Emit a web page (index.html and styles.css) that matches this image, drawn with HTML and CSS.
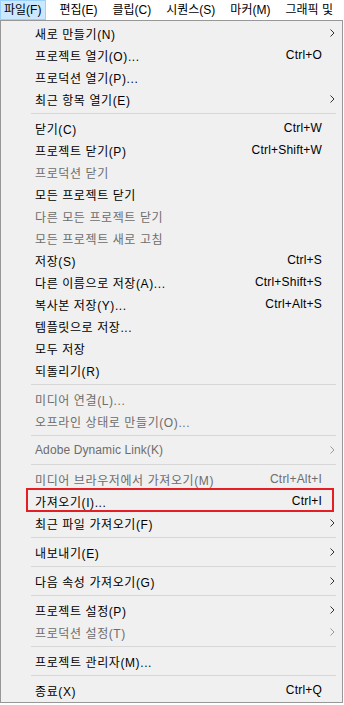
FILE: index.html
```html
<!DOCTYPE html>
<html lang="ko">
<head>
<meta charset="utf-8">
<title>파일 메뉴</title>
<link rel="stylesheet" href="styles.css">
</head>
<body>
<div class="menubar">
  <span class="top active">파일(F)</span>
  <span class="top">편집(E)</span>
  <span class="top">클립(C)</span>
  <span class="top">시퀀스(S)</span>
  <span class="top">마커(M)</span>
  <span class="top">그래픽 및</span>
</div>
<div class="menu">
  <div class="item"><span class="label">새로 만들기(N)</span><span class="key"></span><span class="arrow"><svg viewBox="0 0 5 8" width="5" height="8"><path d="M0.5 0.5 L4 4 L0.5 7.5" fill="none" stroke="currentColor" stroke-width="1"/></svg></span></div>
  <div class="item"><span class="label">프로젝트 열기(O)...</span><span class="key">Ctrl+O</span><span class="arrow"></span></div>
  <div class="item"><span class="label">프로덕션 열기(P)...</span><span class="key"></span><span class="arrow"></span></div>
  <div class="item"><span class="label">최근 항목 열기(E)</span><span class="key"></span><span class="arrow"><svg viewBox="0 0 5 8" width="5" height="8"><path d="M0.5 0.5 L4 4 L0.5 7.5" fill="none" stroke="currentColor" stroke-width="1"/></svg></span></div>
  <div class="sep"></div>
  <div class="item"><span class="label">닫기(C)</span><span class="key">Ctrl+W</span><span class="arrow"></span></div>
  <div class="item"><span class="label">프로젝트 닫기(P)</span><span class="key">Ctrl+Shift+W</span><span class="arrow"></span></div>
  <div class="item disabled"><span class="label">프로덕션 닫기</span><span class="key"></span><span class="arrow"></span></div>
  <div class="item"><span class="label">모든 프로젝트 닫기</span><span class="key"></span><span class="arrow"></span></div>
  <div class="item disabled"><span class="label">다른 모든 프로젝트 닫기</span><span class="key"></span><span class="arrow"></span></div>
  <div class="item disabled"><span class="label">모든 프로젝트 새로 고침</span><span class="key"></span><span class="arrow"></span></div>
  <div class="item"><span class="label">저장(S)</span><span class="key">Ctrl+S</span><span class="arrow"></span></div>
  <div class="item"><span class="label">다른 이름으로 저장(A)...</span><span class="key">Ctrl+Shift+S</span><span class="arrow"></span></div>
  <div class="item"><span class="label">복사본 저장(Y)...</span><span class="key">Ctrl+Alt+S</span><span class="arrow"></span></div>
  <div class="item"><span class="label">템플릿으로 저장...</span><span class="key"></span><span class="arrow"></span></div>
  <div class="item"><span class="label">모두 저장</span><span class="key"></span><span class="arrow"></span></div>
  <div class="item"><span class="label">되돌리기(R)</span><span class="key"></span><span class="arrow"></span></div>
  <div class="sep"></div>
  <div class="item disabled"><span class="label">미디어 연결(L)...</span><span class="key"></span><span class="arrow"></span></div>
  <div class="item disabled"><span class="label">오프라인 상태로 만들기(O)...</span><span class="key"></span><span class="arrow"></span></div>
  <div class="sep"></div>
  <div class="item disabled latin"><span class="label">Adobe Dynamic Link(K)</span><span class="key"></span><span class="arrow"><svg viewBox="0 0 5 8" width="5" height="8"><path d="M0.5 0.5 L4 4 L0.5 7.5" fill="none" stroke="currentColor" stroke-width="1"/></svg></span></div>
  <div class="sep"></div>
  <div class="item disabled"><span class="label">미디어 브라우저에서 가져오기(M)</span><span class="key">Ctrl+Alt+I</span><span class="arrow"></span></div>
  <div class="item marked"><span class="label">가져오기(I)...</span><span class="key">Ctrl+I</span><span class="arrow"></span></div>
  <div class="item"><span class="label">최근 파일 가져오기(F)</span><span class="key"></span><span class="arrow"><svg viewBox="0 0 5 8" width="5" height="8"><path d="M0.5 0.5 L4 4 L0.5 7.5" fill="none" stroke="currentColor" stroke-width="1"/></svg></span></div>
  <div class="sep"></div>
  <div class="item"><span class="label">내보내기(E)</span><span class="key"></span><span class="arrow"><svg viewBox="0 0 5 8" width="5" height="8"><path d="M0.5 0.5 L4 4 L0.5 7.5" fill="none" stroke="currentColor" stroke-width="1"/></svg></span></div>
  <div class="sep"></div>
  <div class="item"><span class="label">다음 속성 가져오기(G)</span><span class="key"></span><span class="arrow"><svg viewBox="0 0 5 8" width="5" height="8"><path d="M0.5 0.5 L4 4 L0.5 7.5" fill="none" stroke="currentColor" stroke-width="1"/></svg></span></div>
  <div class="sep"></div>
  <div class="item"><span class="label">프로젝트 설정(P)</span><span class="key"></span><span class="arrow"><svg viewBox="0 0 5 8" width="5" height="8"><path d="M0.5 0.5 L4 4 L0.5 7.5" fill="none" stroke="currentColor" stroke-width="1"/></svg></span></div>
  <div class="item disabled"><span class="label">프로덕션 설정(T)</span><span class="key"></span><span class="arrow"><svg viewBox="0 0 5 8" width="5" height="8"><path d="M0.5 0.5 L4 4 L0.5 7.5" fill="none" stroke="currentColor" stroke-width="1"/></svg></span></div>
  <div class="sep"></div>
  <div class="item"><span class="label">프로젝트 관리자(M)...</span><span class="key"></span><span class="arrow"></span></div>
  <div class="sep"></div>
  <div class="item"><span class="label">종료(X)</span><span class="key">Ctrl+Q</span><span class="arrow"></span></div>
</div>
</body>
</html>
```

FILE: styles.css
```css
html, body {
  margin: 0;
  padding: 0;
  background: #ffffff;
}

body {
  font-family: "Liberation Sans", "Noto Sans CJK KR", sans-serif;
  font-size: 12px;
  color: #000000;
  width: 344px;
  overflow: hidden;
}

.menubar {
  display: flex;
  height: 20px;
  white-space: nowrap;
  overflow: hidden;
}

.top {
  box-sizing: border-box;
  height: 20px;
  line-height: 18px;
  padding: 0 7px 0 6px;
  margin-right: 0;
  border: 1px solid transparent;
}

.top.active {
  background: #cce8ff;
  border-color: #99d1ff;
  padding: 0 4px 0 3px;
  margin-right: 6px;
}

.menu {
  box-sizing: border-box;
  width: 343px;
  background: #f0f0f0;
  border: 1px solid #979797;
  padding: 1px 0;
}

.item {
  position: relative;
  display: grid;
  grid-template-columns: 1fr auto 20px;
  align-items: center;
  height: 22px;
  padding-left: 34px;
  white-space: nowrap;
}

.label {
  letter-spacing: 0.6px;
}

.item.latin .label {
  letter-spacing: 0.1px;
}

.item.disabled {
  color: #6d6d6d;
}

.key {
  text-align: right;
  letter-spacing: 0.2px;
}

.arrow {
  display: flex;
  justify-content: center;
  align-items: center;
  color: #333333;
  padding-left: 1px;
}

.item.disabled .arrow {
  color: #9a9a9a;
}

.sep {
  height: 1px;
  margin: 3px 6px 3px 30px;
  background: #d7d7d7;
}

.item.marked::after {
  content: "";
  position: absolute;
  left: 25px;
  right: 8px;
  top: -2px;
  bottom: 0;
  border: 2px solid #e31e24;
}
```
